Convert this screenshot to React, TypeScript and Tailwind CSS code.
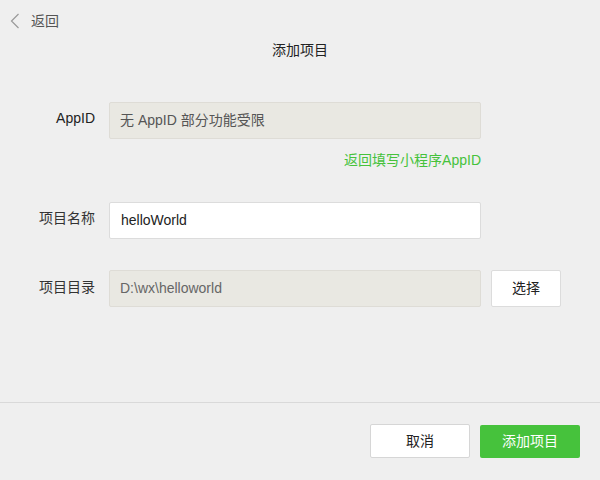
export default function App() {
  return (
    <div className="w-[600px] h-[480px] bg-[#efefef] flex flex-col text-[14px] text-[#333] font-['Liberation_Sans','Noto_Sans_CJK_SC',sans-serif]">
      {/* Back */}
      <div className="h-[40px] flex items-center pl-[10px] pt-[2px] text-[#555]">
        <svg width="10" height="16" viewBox="0 0 10 16" fill="none" className="mr-[11px]">
          <path d="M8.5 1 L1.5 8 L8.5 15" stroke="#9a9a9a" strokeWidth="1.2" />
        </svg>
        <span>返回</span>
      </div>

      {/* Title */}
      <div className="h-[20px] leading-[20px] text-center text-[#222]">添加项目</div>

      {/* Form */}
      <div className="mt-[42px]">
        <div className="flex items-start">
          <div className="w-[95px] text-right leading-[20px] pt-[6px] text-[#222]">AppID</div>
          <div className="ml-[14px] w-[372px] h-[37px] flex items-center px-[10px] bg-[#e9e8e2] border border-[#dedcd6] rounded-[2px] text-[#555]">
            无 AppID 部分功能受限
          </div>
        </div>
        <div className="w-[481px] mt-[11px] leading-[20px] text-right text-[#46c23c]">返回填写小程序AppID</div>

        <div className="flex items-start mt-[32px]">
          <div className="w-[95px] text-right leading-[20px] pt-[6px]">项目名称</div>
          <div className="ml-[14px] w-[372px] h-[37px] flex items-center px-[11px] bg-white border border-[#dcdcdc] rounded-[2px] text-[#222]">
            helloWorld
          </div>
        </div>

        <div className="flex items-start mt-[31px]">
          <div className="w-[95px] text-right leading-[20px] pt-[7px]">项目目录</div>
          <div className="ml-[14px] w-[372px] h-[37px] flex items-center px-[10px] bg-[#e9e8e2] border border-[#dedcd6] rounded-[2px] text-[#666]">
            D:\wx\helloworld
          </div>
          <button className="ml-[10px] w-[70px] h-[37px] bg-white border border-[#dcdcdc] rounded-[2px] text-[#222]">
            选择
          </button>
        </div>
      </div>

      <div className="flex-1" />

      {/* Footer */}
      <div className="h-[78px] border-t border-[#d9d9d9] flex justify-end items-start pt-[21px] pr-[20px] gap-[10px]">
        <button className="w-[100px] h-[34px] bg-white border border-[#d6d6d6] rounded-[2px] text-[#222]">取消</button>
        <button className="w-[100px] h-[33px] mt-[1px] bg-[#46c23c] rounded-[2px] text-white">添加项目</button>
      </div>
    </div>
  );
}
